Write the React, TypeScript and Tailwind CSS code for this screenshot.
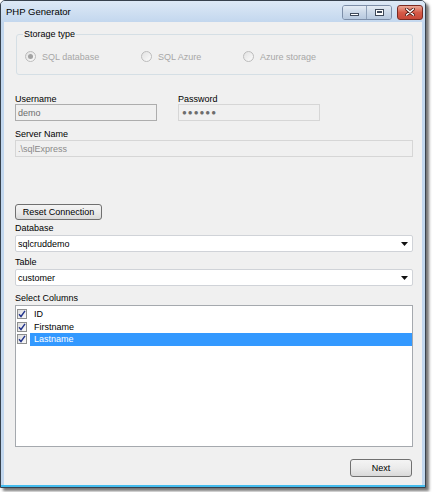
import React from "react";

function Radio({ checked, label, width }: { checked?: boolean; label: string; width: string }) {
  return (
    <div className={`flex items-center ${width}`}>
      <div className="w-[11px] h-[11px] rounded-full border border-[#bcbcbc] bg-linear-to-br from-[#e2e2e2] to-[#fbfbfb] flex items-center justify-center">
        {checked && <div className="w-[5px] h-[5px] rounded-full bg-[#a3a3a3]" />}
      </div>
      <span className="ml-[6px] text-[#a7a7a7]">{label}</span>
    </div>
  );
}

function Check() {
  return (
    <div className="w-[10px] h-[10px] border border-[#8e8f8f] bg-linear-to-br from-[#dcdcdc] to-[#fafafa] flex items-center justify-center shrink-0">
      <svg width="8" height="8" viewBox="0 0 8 8">
        <path d="M1 4.2 L3 6.5 L7 0.8" fill="none" stroke="#22348c" strokeWidth="1.4" />
      </svg>
    </div>
  );
}

function Combo({ value }: { value: string }) {
  return (
    <div className="mt-[2px] h-[17px] bg-white border border-[#d0d3d8] rounded-[2px] flex items-center pl-[2px] pr-[4px] text-black">
      <span className="flex-1">{value}</span>
      <svg width="7" height="4" viewBox="0 0 7 4" className="mt-[1px]">
        <path d="M0 0 H7 L3.5 4 Z" fill="#111" />
      </svg>
    </div>
  );
}

export default function App() {
  return (
    <div className="w-[432px] h-[492px] bg-white font-['Liberation_Sans',Arial,sans-serif] text-[9px] leading-[10px] text-black">
      <div className="w-[426px] h-[488px] border border-[#37414d] rounded-t-[5px] bg-[#c2d7ee] shadow-[3px_3px_3px_rgba(0,0,0,0.55)] flex flex-col overflow-hidden">
        {/* Title bar */}
        <div className="h-[21px] shrink-0 bg-linear-to-b from-[#dde9f6] to-[#c3d7ee] flex items-center pl-[5px] pr-[2px]">
          <span className="text-[9.5px] leading-[12px] text-black mt-[1px]">PHP Generator</span>
          <div className="ml-auto flex items-center mt-[1px]">
            <div className="flex h-[15px] border border-[#7d8ea8] rounded-[3px] overflow-hidden">
              <div className="w-[24px] h-full bg-linear-to-b from-[#e4ecf5] via-[#cbd8e8] to-[#b7c9df] border-r border-[#8ea0b8] flex items-end justify-center pb-[3px]">
                <div className="w-[9px] h-[3px] bg-white border border-[#3f4a5a]" />
              </div>
              <div className="w-[24px] h-full bg-linear-to-b from-[#e4ecf5] via-[#cbd8e8] to-[#b7c9df] flex items-center justify-center">
                <div className="w-[9px] h-[7px] bg-white border border-[#3f4a5a] flex items-center justify-center">
                  <div className="w-[5px] h-[2px] bg-[#c9d5e3] border border-[#3f4a5a]" />
                </div>
              </div>
            </div>
            <div className="ml-[5px] w-[26px] h-[15px] border border-[#7a2a22] rounded-[3px] bg-linear-to-b from-[#e9a797] via-[#d55a48] to-[#c8493a] flex items-center justify-center">
              <svg width="10" height="8" viewBox="0 0 10 8">
                <path d="M1.5 1 L8.5 7 M8.5 1 L1.5 7" stroke="#4a1510" strokeWidth="3" strokeLinecap="round" />
                <path d="M1.5 1 L8.5 7 M8.5 1 L1.5 7" stroke="#ffffff" strokeWidth="1.6" strokeLinecap="round" />
              </svg>
            </div>
          </div>
        </div>

        {/* Client area */}
        <div className="flex-1 mx-[3px] bg-[#f0f0f0] flex flex-col pl-[11px] pr-[9px]">
          {/* Storage type group */}
          <div className="relative mt-[12px] ml-[1px] h-[41px] border border-[#d5dfe5] rounded-[3px] flex items-start pt-[16px] pl-[8px]">
            <span className="absolute -top-[6px] left-[6px] bg-[#f0f0f0] px-[1px] text-black">Storage type</span>
            <Radio checked label="SQL database" width="w-[116px]" />
            <Radio label="SQL Azure" width="w-[102px]" />
            <Radio label="Azure storage" width="w-[120px]" />
          </div>

          {/* Username / Password */}
          <div className="mt-[19px] flex">
            <div className="w-[163px] flex flex-col">
              <span>Username</span>
              <div className="h-[17px] w-[142px] border border-[#adadad] bg-[#f0f0f0] flex items-center pl-[2px] text-[#6d6d6d]">demo</div>
            </div>
            <div className="flex flex-col">
              <span>Password</span>
              <div className="h-[17px] w-[142px] border border-[#d6d6d6] bg-[#f0f0f0] flex items-center pl-[3px] text-[#6d6d6d] tracking-[1px] text-[8px]">●●●●●●</div>
            </div>
          </div>

          <span className="mt-[8px]">Server Name</span>
          <div className="mt-[1px] h-[17px] border border-[#d6d6d6] bg-[#f0f0f0] flex items-center pl-[2px] text-[#8a8a8a]">.\sqlExpress</div>

          <button className="mt-[47px] w-[87px] h-[16px] border border-[#707070] rounded-[3px] bg-linear-to-b from-[#f4f4f4] via-[#ebebeb] to-[#d9d9d9] flex items-center justify-center text-black text-[9px] leading-[10px]">
            Reset Connection
          </button>

          <span className="mt-[3px]">Database</span>
          <Combo value="sqlcruddemo" />

          <span className="mt-[5px]">Table</span>
          <Combo value="customer" />

          <span className="mt-[7px]">Select Columns</span>
          <div className="mt-[2px] h-[142px] border border-[#a5a9ae] bg-white flex flex-col pt-[2px]">
            {[
              { name: "ID", sel: false },
              { name: "Firstname", sel: false },
              { name: "Lastname", sel: true },
            ].map((it) => (
              <div key={it.name} className="h-[12.5px] flex items-center pl-[1px]">
                <Check />
                <div className={`ml-[3px] flex-1 h-full flex items-center pl-[4px] ${it.sel ? "bg-[#3399ff] text-white" : "text-black"}`}>
                  {it.name}
                </div>
              </div>
            ))}
          </div>

          <div className="mt-[12px] flex justify-end pr-[1px]">
            <button className="w-[62px] h-[18px] border border-[#707070] rounded-[3px] bg-linear-to-b from-[#f4f4f4] via-[#ebebeb] to-[#d9d9d9] flex items-center justify-center text-black text-[9px] leading-[10px]">
              Next
            </button>
          </div>
        </div>
        <div className="h-[2px] shrink-0 bg-[#45bdee]" />
      </div>
    </div>
  );
}
